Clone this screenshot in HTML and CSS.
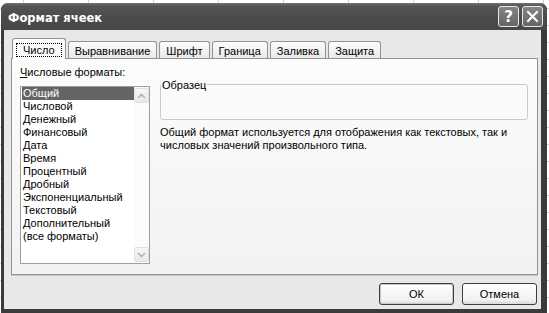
FILE: index.html
```html
<!DOCTYPE html>
<html lang="ru">

<head>
    <meta charset="UTF-8">
    <title>Формат ячеек</title>
    <link rel="stylesheet" href="styles.css">
</head>

<body>
    <div class="window">
        <div class="titlebar">
            <span class="title">Формат ячеек</span>
            <div class="caption-buttons">
                <span class="cap-btn">?</span>
                <span class="cap-btn">
                    <svg width="13" height="13" viewBox="0 0 13 13">
                        <path d="M2 2 L11 11 M11 2 L2 11" stroke="#fff" stroke-width="2" stroke-linecap="square" />
                    </svg>
                </span>
            </div>
        </div>

        <div class="client">
            <div class="tabs">
                <div class="tab active"><span class="focus">Число</span></div>
                <div class="tab">Выравнивание</div>
                <div class="tab">Шрифт</div>
                <div class="tab">Граница</div>
                <div class="tab">Заливка</div>
                <div class="tab">Защита</div>
            </div>

            <div class="panel">
                <div class="formats">
                    <div class="label"><u>Ч</u>исловые форматы:</div>
                    <div class="listbox">
                        <ul class="items">
                            <li class="selected">Общий</li>
                            <li>Числовой</li>
                            <li>Денежный</li>
                            <li>Финансовый</li>
                            <li>Дата</li>
                            <li>Время</li>
                            <li>Процентный</li>
                            <li>Дробный</li>
                            <li>Экспоненциальный</li>
                            <li>Текстовый</li>
                            <li>Дополнительный</li>
                            <li>(все форматы)</li>
                        </ul>
                        <div class="scrollbar">
                            <span class="arrow">
                                <svg width="9" height="6" viewBox="0 0 9 6">
                                    <path d="M1 5 L4.5 1.5 L8 5" fill="none" stroke="#b4b4b4" stroke-width="1.6" />
                                </svg>
                            </span>
                            <span class="track"></span>
                            <span class="arrow">
                                <svg width="9" height="6" viewBox="0 0 9 6">
                                    <path d="M1 1 L4.5 4.5 L8 1" fill="none" stroke="#b4b4b4" stroke-width="1.6" />
                                </svg>
                            </span>
                        </div>
                    </div>
                </div>

                <div class="details">
                    <fieldset class="sample">
                        <legend>Образец</legend>
                        <div class="sample-value"></div>
                    </fieldset>
                    <p class="description">Общий формат используется для отображения как текстовых, так и числовых значений произвольного типа.</p>
                </div>
            </div>

            <div class="actions">
                <button class="button default">ОК</button>
                <button class="button">Отмена</button>
            </div>
        </div>
    </div>
</body>

</html>
```

FILE: styles.css
```css
* {
    box-sizing: border-box;
}

body {
    margin: 0;
    width: 549px;
    height: 313px;
    overflow: hidden;
    font-family: "Liberation Sans", Arial, sans-serif;
    font-size: 11px;
    color: #000;
    background-color: #ffffff;
    background-image:
        linear-gradient(90deg, #d2d2d2 1px, transparent 1px),
        linear-gradient(#d2d2d2 1px, transparent 1px);
    background-size: 65px 17px;
    background-position: 23px 8px;
}

.window {
    margin: 3px 0 0 1px;
    width: 546px;
    height: 310px;
    background-color: #3b3b3b;
    border-radius: 7px 7px 0 0;
    display: flex;
    flex-direction: column;
}

.titlebar {
    height: 27px;
    flex-shrink: 0;
    display: flex;
    align-items: center;
    justify-content: space-between;
    padding: 0 4px 0 7px;
    border-radius: 7px 7px 0 0;
    background: linear-gradient(#727272 0, #555555 3px, #4b4b4b 50%, #474747 100%);
}

.title {
    padding-top: 3px;
    font-family: "DejaVu Sans", sans-serif;
    font-weight: bold;
    font-size: 11.5px;
    color: #ffffff;
}

.caption-buttons {
    display: flex;
    gap: 3px;
}

.cap-btn {
    width: 21px;
    height: 21px;
    display: flex;
    align-items: center;
    justify-content: center;
    border: 1px solid #e8e8e8;
    border-radius: 3px;
    background: linear-gradient(#858585, #646464);
    color: #ffffff;
    font-family: "DejaVu Sans", sans-serif;
    font-weight: bold;
    font-size: 15px;
}

.client {
    flex: 1;
    margin: 0 6px 4px 3px;
    background-color: #e8e8e8;
    display: flex;
    flex-direction: column;
}

/* tabs */
.tabs {
    display: flex;
    align-items: flex-end;
    gap: 2px;
    margin: 8px 0 0 8px;
}

.tab {
    height: 17px;
    padding: 3px 6px 0;
    border: 1px solid #939393;
    border-bottom: none;
    border-radius: 3px 3px 0 0;
    background: linear-gradient(#fdfdfd, #e9e9e9);
    line-height: 13px;
    white-space: nowrap;
}

.tab.active {
    position: relative;
    z-index: 1;
    height: 21px;
    padding: 4px 3px 0;
    margin-bottom: -1px;
    background: #fcfcfc;
}

.focus {
    display: block;
    padding: 0 6px;
    border: 1px dotted #000;
    line-height: 12px;
}

/* tab page */
.panel {
    height: 217px;
    flex-shrink: 0;
    margin: 0 3px 0 7px;
    padding: 7px 9px 0 8px;
    display: flex;
    gap: 10px;
    border: 1px solid #939393;
    background: linear-gradient(#fcfcfc, #f2f2f2);
    box-shadow: 0 1px 0 #c6c6c6;
}

.label {
    line-height: 13px;
    margin-bottom: 7px;
}

.listbox {
    width: 130px;
    height: 178px;
    display: flex;
    border: 1px solid #9e9e9e;
    background-color: #ffffff;
}

.items {
    flex: 1;
    list-style: none;
    margin: 0;
    padding: 0 0 0 1px;
}

.items li {
    line-height: 13px;
    padding-left: 1px;
    white-space: nowrap;
}

.items li.selected {
    background-color: #646464;
    color: #ffffff;
}

.scrollbar {
    width: 15px;
    display: flex;
    flex-direction: column;
    padding: 1px 0;
    background-color: #fbfbfb;
}

.arrow {
    height: 15px;
    display: flex;
    align-items: center;
    justify-content: center;
    border: 1px solid #e0e0e0;
    border-radius: 2px;
    background: linear-gradient(#f6f6f6, #e8e8e8);
}

.track {
    flex: 1;
}

.details {
    flex: 1;
    display: flex;
    flex-direction: column;
}

.sample {
    margin: 11px 0 0;
    padding: 0;
    min-width: 0;
    border: 1px solid #c9c9c9;
    border-radius: 3px;
}

.sample legend {
    padding: 2px 1px 0;
    line-height: 13px;
}

.sample-value {
    height: 27px;
}

.description {
    margin: 6px 0 0;
    line-height: 13px;
}

/* dialog buttons */
.actions {
    display: flex;
    justify-content: flex-end;
    gap: 8px;
    margin: 8px 4px 0 0;
}

.button {
    width: 75px;
    height: 22px;
    padding: 0;
    border: 1px solid #3e3e3e;
    border-radius: 3px;
    background: linear-gradient(#ffffff, #f1f1f1 80%, #dadada);
    font: inherit;
    color: #000;
}

.button.default {
    box-shadow: inset 0 0 0 1px #c8c8c8;
}
```
